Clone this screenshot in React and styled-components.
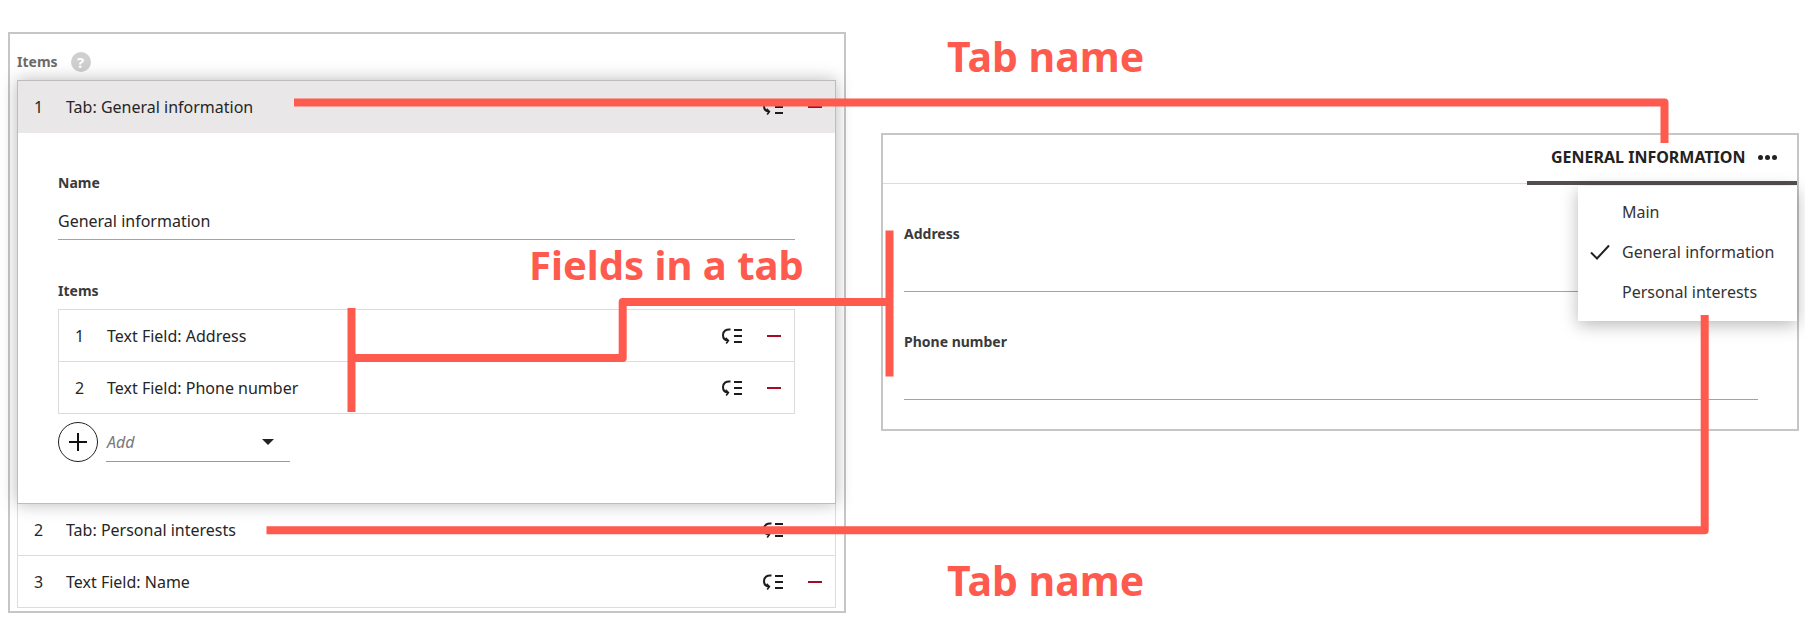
import styled, { createGlobalStyle } from "styled-components";

const GlobalStyle = createGlobalStyle`
  html, body {
    margin: 0;
    padding: 0;
    background: #fff;
  }
  body {
    font-family: "Noto Sans", "Open Sans", sans-serif;
    color: #222;
  }
`;

const RED = "#ff5a4e";

const ReorderIcon = () => (
  <svg width="20" height="16" viewBox="0 0 20 16" fill="none">
    <path d="M8.5 1.500 C4 1 1 3 1 7 C1 10.500 3 12.300 6 12.500" stroke="#1c1c1c" strokeWidth="2" />
    <path d="M3.600 9.800 L6.400 12.500 L4.200 15.400" stroke="#1c1c1c" strokeWidth="1.600" />
    <path d="M12 2h8M12 8h8M12 14h8" stroke="#1c1c1c" strokeWidth="2.200" />
  </svg>
);

const Rows = ({ rows }) =>
  rows.map((row, i) => (
    <Row key={row} $inner>
      <Num>{i + 1}</Num>
      <RowLabel>{row}</RowLabel>
      <ReorderIcon />
      <Minus />
    </Row>
  ));

const App = () => (
  <Page>
    <GlobalStyle />
    <Builder>
      <Heading>
        <MutedLabel>Items</MutedLabel>
        <Help>?</Help>
      </Heading>
      <OpenCard>
        <OpenHeader>
          <Num>1</Num>
          <RowLabel>Tab: General information</RowLabel>
          <ReorderIcon />
          <Minus />
        </OpenHeader>
        <CardBody>
          <Label>Name</Label>
          <Value>General information</Value>
          <Label $second>Items</Label>
          <InnerList>
            <Rows rows={["Text Field: Address", "Text Field: Phone number"]} />
          </InnerList>
          <AddRow>
            <AddButton>
              <svg width="22" height="22" viewBox="0 0 22 22">
                <path d="M11 2v18M2 11h18" stroke="#111" strokeWidth="2" />
              </svg>
            </AddButton>
            <AddSelect>
              <i>Add</i>
              <Caret />
            </AddSelect>
          </AddRow>
        </CardBody>
      </OpenCard>
      <ClosedRows>
        <Row>
          <Num>2</Num>
          <RowLabel>Tab: Personal interests</RowLabel>
          <ReorderIcon />
          <Minus />
        </Row>
        <Row>
          <Num>3</Num>
          <RowLabel>Text Field: Name</RowLabel>
          <ReorderIcon />
          <Minus />
        </Row>
      </ClosedRows>
    </Builder>

    <Preview>
      <TabBar>
        <ActiveTab>
          GENERAL INFORMATION
          <Dots>
            <span />
            <span />
            <span />
          </Dots>
        </ActiveTab>
      </TabBar>
      <Fields>
        <Field>
          <Label>Address</Label>
        </Field>
        <Field>
          <Label>Phone number</Label>
        </Field>
      </Fields>
      <Menu>
        <MenuItem>Main</MenuItem>
        <MenuItem>
          <Check viewBox="0 0 20 16" fill="none">
            <path d="M1 8.500 L7 14.500 L19 1.500" stroke="#222" strokeWidth="2" />
          </Check>
          General information
        </MenuItem>
        <MenuItem>Personal interests</MenuItem>
      </Menu>
    </Preview>

    {/* red notes drawn on top of the screenshot */}
    <Notes viewBox="0 0 1805 635" fill="none" stroke={RED} strokeWidth="8" strokeLinejoin="round">
      <path d="M294 102.500H1664.500V143" />
      <path d="M351.500 308V412M351.500 358H622.700V302H889.500M889.500 230.500V376.500" />
      <path d="M266.500 530.300H1704.700V315" />
    </Notes>
    <Note $left={947} $top={30} $size={41}>Tab name</Note>
    <Note $left={529} $top={239} $size={40}>Fields in a tab</Note>
    <Note $left={947} $top={554} $size={41}>Tab name</Note>
  </Page>
);

export default App;

const Page = styled.div`
  position: relative;
  width: 1805px;
  height: 635px;
  overflow: hidden;
  box-sizing: border-box;
  padding: 32px 6px 0 8px;
  display: flex;
  justify-content: space-between;
  align-items: flex-start;
`;

const Builder = styled.section`
  width: 838px;
  height: 581px;
  box-sizing: border-box;
  border: 2px solid #c6c6c6;
  padding: 0 8px 0 7px;
`;

const Heading = styled.div`
  height: 46px;
  padding-top: 9px;
  box-sizing: border-box;
  display: flex;
  align-items: center;
  gap: 13px;
`;

const MutedLabel = styled.span`
  font-size: 14px;
  font-weight: 700;
  color: #6f6a6a;
`;

const Help = styled.span`
  width: 20px;
  height: 20px;
  border-radius: 50%;
  background: #cfcfcf;
  color: #fff;
  font-size: 15px;
  font-weight: 700;
  display: flex;
  align-items: center;
  justify-content: center;
`;

const OpenCard = styled.div`
  position: relative;
  z-index: 1;
  border: 1px solid #bdbdbd;
  background: #fff;
  box-shadow: 0 0 16px rgba(0, 0, 0, 0.28);
`;

const Row = styled.div`
  height: 52px;
  box-sizing: border-box;
  display: flex;
  align-items: center;
  padding: 0 13px 0 16px;
  font-size: 16px;
  color: #262626;
  border-bottom: 1px solid #dcdcdc;
  &:last-child {
    height: ${(p) => (p.$inner ? "51px" : "52px")};
    border-bottom: ${(p) => (p.$inner ? "none" : "1px solid #dcdcdc")};
  }
`;

const OpenHeader = styled(Row)`
  height: 52px;
  background: #e9e7e8;
  border-bottom: none;
  &:last-child {
    height: 52px;
  }
`;

const Num = styled.span`
  width: 32px;
  flex: none;
`;

const RowLabel = styled.span`
  flex: 1;
`;

const Minus = styled.span`
  width: 14px;
  height: 2px;
  margin-left: 25px;
  background: #a80a22;
`;

const CardBody = styled.div`
  padding: 40px 40px 40px 40px;
  height: 370px;
  box-sizing: border-box;
`;

const Label = styled.div`
  font-size: 14px;
  font-weight: 700;
  line-height: 20px;
  color: #3a3a3a;
  margin-top: ${(p) => (p.$second ? "41px" : "0")};
`;

const Value = styled.div`
  font-size: 16px;
  line-height: 22px;
  height: 38px;
  box-sizing: border-box;
  padding-top: 8px;
  margin-top: 9px;
  border-bottom: 1px solid #a3a3a3;
  color: #262626;
`;

const InnerList = styled.div`
  margin-top: 8px;
  border: 1px solid #dcdcdc;
`;

const AddRow = styled.div`
  margin-top: 8px;
  display: flex;
  gap: 8px;
`;

const AddButton = styled.div`
  width: 40px;
  height: 40px;
  box-sizing: border-box;
  border: 1px solid #222;
  border-radius: 50%;
  display: flex;
  align-items: center;
  justify-content: center;
`;

const AddSelect = styled.div`
  width: 184px;
  height: 40px;
  box-sizing: border-box;
  border-bottom: 1px solid #9b9b9b;
  display: flex;
  align-items: center;
  justify-content: space-between;
  padding: 0 16px 0 1px;
  font-size: 16px;
  color: #7d7878;
`;

const Caret = styled.span`
  width: 0;
  height: 0;
  border-left: 6px solid transparent;
  border-right: 6px solid transparent;
  border-top: 6px solid #222;
`;

const ClosedRows = styled.div`
  border: 1px solid #dcdcdc;
  border-top: none;
  border-bottom: none;
`;

const Preview = styled.section`
  position: relative;
  width: 918px;
  height: 298px;
  margin-top: 101px;
  box-sizing: border-box;
  border: 2px solid #c6c6c6;
`;

const TabBar = styled.div`
  height: 49px;
  box-sizing: border-box;
  display: flex;
  justify-content: flex-end;
  border-bottom: 1px solid #dcdcdc;
`;

const ActiveTab = styled.div`
  width: 270px;
  height: 50px;
  box-sizing: border-box;
  padding: 0 20px 2px 24px;
  display: flex;
  align-items: center;
  justify-content: space-between;
  border-bottom: 4px solid #554e4e;
  font-size: 16px;
  font-weight: 700;
  color: #222;
`;

const Dots = styled.div`
  display: flex;
  gap: 2px;
  span {
    width: 5px;
    height: 5px;
    border-radius: 50%;
    background: #222;
  }
`;

const Fields = styled.div`
  padding: 0 39px 0 21px;
`;

const Field = styled.div`
  height: 108px;
  box-sizing: border-box;
  padding-top: 40px;
  border-bottom: 1px solid #a3a3a3;
`;

const Menu = styled.div`
  position: absolute;
  top: 51px;
  right: 0;
  width: 219px;
  height: 135px;
  padding: 6px 0;
  box-sizing: border-box;
  background: #fff;
  box-shadow: 0 4px 16px rgba(0, 0, 0, 0.28);
`;

const MenuItem = styled.div`
  position: relative;
  height: 40px;
  padding-left: 44px;
  display: flex;
  align-items: center;
  font-size: 16px;
  color: #333;
`;

const Check = styled.svg`
  position: absolute;
  left: 12px;
  top: 12px;
  width: 20px;
  height: 16px;
`;

const Notes = styled.svg`
  position: absolute;
  inset: 0;
  width: 1805px;
  height: 635px;
  z-index: 2;
  pointer-events: none;
`;

const Note = styled.div`
  position: absolute;
  left: ${(p) => p.$left}px;
  top: ${(p) => p.$top}px;
  z-index: 3;
  font-size: ${(p) => p.$size}px;
  line-height: 52px;
  font-weight: 700;
  color: ${RED};
  white-space: nowrap;
`;
